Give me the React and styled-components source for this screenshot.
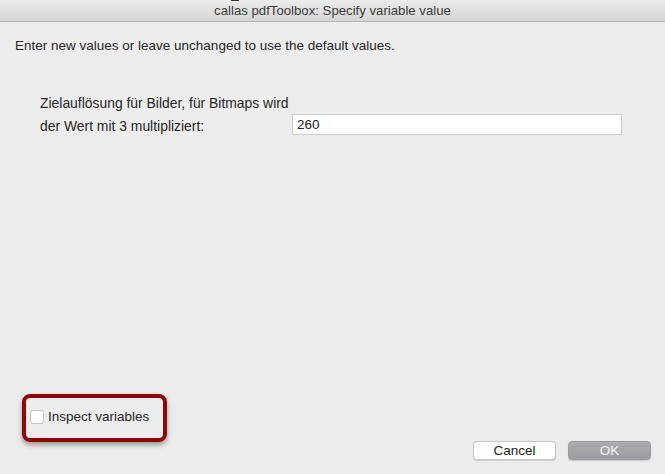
import styled, { createGlobalStyle } from 'styled-components'

const Global = createGlobalStyle`
  html, body { margin: 0; padding: 0; }
  body {
    background: #ececec;
    font-family: "Liberation Sans", Arial, sans-serif;
    color: #262626;
  }
`

function App() {
  return (
    <Window>
      <Global />
      <TitleBar>
        <Notch />
        callas pdfToolbox: Specify variable value
      </TitleBar>
      <Body>
        <Intro>Enter new values or leave unchanged to use the default values.</Intro>
        <Field>
          <Label>
            Zielauflösung für Bilder, für Bitmaps wird<br />
            der Wert mit 3 multipliziert:
          </Label>
          <Input defaultValue="260" />
        </Field>
      </Body>
      <Footer>
        <Highlight>
          <Check type="checkbox" />
          <CheckLabel>Inspect variables</CheckLabel>
        </Highlight>
        <Buttons>
          <Button>Cancel</Button>
          <Button primary>OK</Button>
        </Buttons>
      </Footer>
    </Window>
  )
}

export default App

const Window = styled.div`
    height: 100vh;
    display: flex;
    flex-direction: column;
    background: #ececec;
`
const TitleBar = styled.div`
    position: relative;
    height: 22px;
    box-sizing: border-box;
    border-bottom: 1px solid #b5b5b5;
    background: linear-gradient(#ebebeb, #d5d5d5);
    display: flex;
    align-items: center;
    justify-content: center;
    font-size: 13.2px;
    color: #3c3c3c;
`
const Notch = styled.span`
    position: absolute;
    top: 0;
    left: 231px;
    width: 8px;
    height: 1px;
    background: #333;
`
const Body = styled.div`
    flex: 1;
    padding: 0 15px;
`
const Intro = styled.p`
    margin: 16px 0 0;
    font-size: 13.5px;
    line-height: 16px;
`
const Field = styled.div`
    display: flex;
    align-items: flex-end;
    margin-top: 38px;
    padding-left: 25px;
`
const Label = styled.div`
    width: 252px;
    font-size: 13.9px;
    line-height: 23px;
`
const Input = styled.input`
    box-sizing: border-box;
    width: 330px;
    height: 21px;
    margin-bottom: 3px;
    padding: 0 4px;
    border: 1px solid #cdcdcd;
    background: #fff;
    font: 13.5px "Liberation Sans", Arial, sans-serif;
    color: #222;
    outline: none;
`
const Footer = styled.div`
    display: flex;
    align-items: flex-end;
    justify-content: space-between;
    padding: 0 14px 14px 22px;
`
const Highlight = styled.div`
    box-sizing: border-box;
    width: 145px;
    height: 48px;
    margin-bottom: 18px;
    border: 4px solid #8e0606;
    border-radius: 8px;
    box-shadow: 0 3px 5px rgba(0, 0, 0, 0.35);
    display: flex;
    align-items: center;
    padding: 0 0 3px 4px;
    gap: 4px;
`
const Check = styled.input`
    appearance: none;
    margin: 0;
    width: 14px;
    height: 14px;
    box-sizing: border-box;
    border: 1px solid #c4c4c4;
    border-radius: 3px;
    background: #fff;
`
const CheckLabel = styled.span`
    font-size: 13.5px;
    color: #262626;
`
const Buttons = styled.div`
    display: flex;
    gap: 12px;
`
const Button = styled.button`
    width: 83px;
    height: 19px;
    box-sizing: border-box;
    border-radius: 4px;
    border: 1px solid ${p => (p.primary ? '#9a9a9d' : '#c8c8c8')};
    background: ${p => (p.primary ? 'linear-gradient(#ababae, #9d9da1)' : '#fff')};
    color: ${p => (p.primary ? '#f2f2f2' : '#222')};
    font: 13.5px "Liberation Sans", Arial, sans-serif;
    padding: 0;
    box-shadow: 0 0.5px 1px rgba(0, 0, 0, 0.15);
`
